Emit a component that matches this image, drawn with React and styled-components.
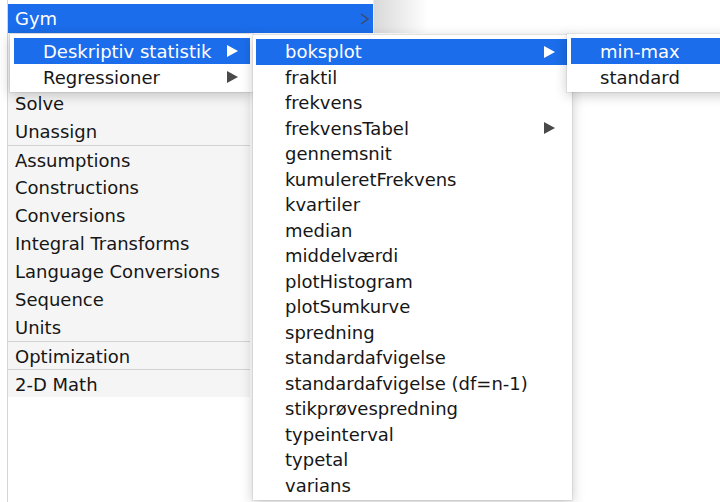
import styled, { createGlobalStyle } from "styled-components";

const GlobalStyle = createGlobalStyle`
  html, body {
    margin: 0;
    padding: 0;
    background: #ffffff;
  }
  body {
    font-family: "DejaVu Sans", "Liberation Sans", sans-serif;
  }
`;

const HIGHLIGHT = "#1b6deb";

const Screen = styled.div`
  position: relative;
  width: 720px;
  height: 502px;
  overflow: hidden;
  background: #ffffff;
  font-size: 18px;
  color: #161616;
`;

const LeftColumn = styled.div`
  margin-left: 7px;
  height: 100%;
  border-left: 1px solid #d6d6d6;
  display: flex;
  flex-direction: column;
`;

const TopStrip = styled.div`
  display: flex;
  padding-top: 4px;
  background: linear-gradient(to right, transparent 365px, #d9d9d9 366px, #ffffff 420px);
`;

const GymRow = styled.div`
  width: 358px;
  height: 29px;
  padding-left: 7px;
  display: flex;
  align-items: center;
  justify-content: space-between;
  background: ${HIGHLIGHT};
  color: #ffffff;
`;

const Chevron = styled.svg`
  margin-right: 4px;
  flex: none;
`;

const BaseMenu = styled.div`
  width: 242px;
  padding-top: 56px;
  background: #f5f5f5;
`;

const BaseItem = styled.div`
  height: 28px;
  line-height: 29px;
  padding-left: 7px;
  box-sizing: border-box;
  border-top: ${(p) => (p.$sep ? "1px solid #d2d2d2" : "none")};
  white-space: nowrap;
`;

const Popup = styled.div`
  position: absolute;
  top: ${(p) => p.$top}px;
  left: ${(p) => p.$left}px;
  width: ${(p) => p.$width}px;
  padding: 4px 0 2px;
  background: #ffffff;
  box-shadow: 0 3px 12px rgba(0, 0, 0, 0.22), 0 0 0 1px rgba(0, 0, 0, 0.06);
`;

const PopupItem = styled.div`
  height: ${(p) => p.$h}px;
  margin: 0 ${(p) => p.$inset}px 0 ${(p) => p.$start}px;
  padding-left: ${(p) => p.$indent}px;
  padding-right: 12px;
  display: flex;
  align-items: center;
  justify-content: space-between;
  white-space: nowrap;
  background: ${(p) => (p.$active ? HIGHLIGHT : "transparent")};
  color: ${(p) => (p.$active ? "#ffffff" : "#161616")};
`;

const Arrow = ({ light }) => (
  <svg width="11" height="12" viewBox="0 0 11 12">
    <polygon points="0,0 11,6 0,12" fill={light ? "#ffffff" : "#4a4a4a"} />
  </svg>
);

const baseItems = [
  { label: "Solve" },
  { label: "Unassign" },
  { label: "Assumptions", sep: true },
  { label: "Constructions" },
  { label: "Conversions" },
  { label: "Integral Transforms" },
  { label: "Language Conversions" },
  { label: "Sequence" },
  { label: "Units" },
  { label: "Optimization", sep: true },
  { label: "2-D Math", sep: true },
];

const statsItems = [
  { label: "boksplot", sub: true, active: true },
  { label: "fraktil" },
  { label: "frekvens" },
  { label: "frekvensTabel", sub: true },
  { label: "gennemsnit" },
  { label: "kumuleretFrekvens" },
  { label: "kvartiler" },
  { label: "median" },
  { label: "middelværdi" },
  { label: "plotHistogram" },
  { label: "plotSumkurve" },
  { label: "spredning" },
  { label: "standardafvigelse" },
  { label: "standardafvigelse (df=n-1)" },
  { label: "stikprøvespredning" },
  { label: "typeinterval" },
  { label: "typetal" },
  { label: "varians" },
];

function Menu({ items, top, left, width, rowHeight, indent, start = 3, inset = 3 }) {
  return (
    <Popup $top={top} $left={left} $width={width}>
      {items.map((item) => (
        <PopupItem
          key={item.label}
          $h={rowHeight}
          $indent={indent}
          $start={start}
          $inset={inset}
          $active={item.active}
        >
          <span>{item.label}</span>
          {item.sub && <Arrow light={item.active} />}
        </PopupItem>
      ))}
    </Popup>
  );
}

export default function App() {
  return (
    <Screen>
      <GlobalStyle />
      <LeftColumn>
        <TopStrip>
          <GymRow>
            <span>Gym</span>
            <Chevron width="9" height="12" viewBox="0 0 9 12">
              <polyline
                points="1,1 8,6 1,11"
                fill="none"
                stroke="#3c4a66"
                strokeWidth="1.4"
              />
            </Chevron>
          </GymRow>
        </TopStrip>
        <BaseMenu>
          {baseItems.map((item) => (
            <BaseItem key={item.label} $sep={item.sep}>
              {item.label}
            </BaseItem>
          ))}
        </BaseMenu>
      </LeftColumn>

      <Menu
        top={34}
        left={10}
        width={243}
        rowHeight={26}
        indent={29}
        start={4}
        items={[
          { label: "Deskriptiv statistik", sub: true, active: true },
          { label: "Regressioner", sub: true },
        ]}
      />
      <Menu
        top={35}
        left={253}
        width={319}
        rowHeight={25.5}
        indent={29}
        inset={5}
        items={statsItems}
      />
      <Menu
        top={34}
        left={567}
        width={170}
        rowHeight={26}
        indent={29}
        start={4}
        items={[{ label: "min-max", active: true }, { label: "standard" }]}
      />
    </Screen>
  );
}
